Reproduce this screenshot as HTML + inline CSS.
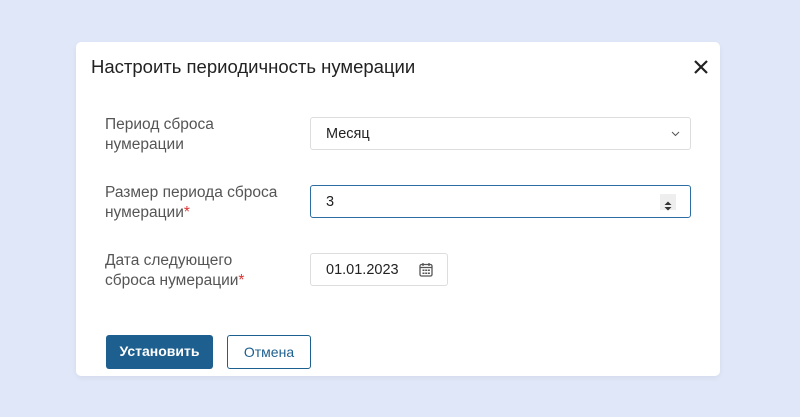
<!DOCTYPE html>
<html><head><meta charset="utf-8"><style>
body{margin:0;width:800px;height:417px;background:#dfe7f8;font-family:"Liberation Sans",sans-serif;position:relative;overflow:hidden}
.m{position:absolute;left:76px;top:42px;width:644px;height:334px;background:#fff;border-radius:5px;box-shadow:0 2px 6px rgba(0,0,0,.05)}
.t{position:absolute;left:15px;top:14px;font-size:18.5px;color:#222}
.x{position:absolute;left:616px;top:16px}
.l{position:absolute;left:29px;font-size:15.5px;color:#555;line-height:19.5px}
.r{color:#d33}
.i{position:absolute;left:234px;border:1px solid #ddd;border-radius:3px;box-sizing:border-box;height:33px;font-size:14.5px;color:#222;line-height:33px;padding-left:15px}
.b{position:absolute;top:293px;height:34px;box-sizing:border-box;border-radius:3px;font-size:14px;line-height:32px;text-align:center}
</style></head><body>
<div class="m">
<div class="t">Настроить периодичность нумерации</div>
<svg class="x" width="18" height="18" viewBox="0 0 18 18"><path d="M3 3L15 15M15 3L3 15" stroke="#222" stroke-width="2.2"/></svg>
<div class="l" style="top:73px">Период сброса<br>нумерации</div>
<div class="i" style="top:75px;width:381px">Месяц<svg style="position:absolute;right:10px;top:13px" width="9" height="6"><path d="M1 1L4.5 4.5L8 1" stroke="#555" fill="none"/></svg></div>
<div class="l" style="top:141px">Размер периода сброса<br>нумерации<span class="r">*</span></div>
<div class="i" style="top:143px;width:381px;border-color:#2d6da3;border-width:1.5px;line-height:32px">3<div style="position:absolute;right:14px;top:8px;width:16px;height:16px;background:#eee"><svg width="16" height="16"><path d="M4.5 7L8 3.5L11.5 7ZM4.5 9L8 12.5L11.5 9Z" fill="#333"/></svg></div></div>
<div class="l" style="top:209px">Дата следующего<br>сброса нумерации<span class="r">*</span></div>
<div class="i" style="top:211px;width:138px">01.01.2023<svg style="position:absolute;right:14px;top:8px" width="14" height="15" viewBox="0 0 14 15"><rect x="1" y="2.5" width="12" height="11.5" rx="1.5" fill="none" stroke="#555" stroke-width="1.3"/><path d="M4 1v3M10 1v3M1 5.5h12" stroke="#555" stroke-width="1.3"/><path d="M3.5 7.5h2v1.5h-2zM6.2 7.5h2v1.5h-2zM8.9 7.5h2v1.5h-2zM3.5 10.5h2v1.5h-2zM6.2 10.5h2v1.5h-2zM8.9 10.5h2v1.5h-2z" fill="#555"/></svg></div>
<div class="b" style="left:30px;width:107px;background:#1d5f8e;color:#fff;font-weight:bold">Установить</div>
<div class="b" style="left:151px;width:84px;border:1px solid #1d5f8e;color:#1d5f8e">Отмена</div>
</div>
</body></html>
